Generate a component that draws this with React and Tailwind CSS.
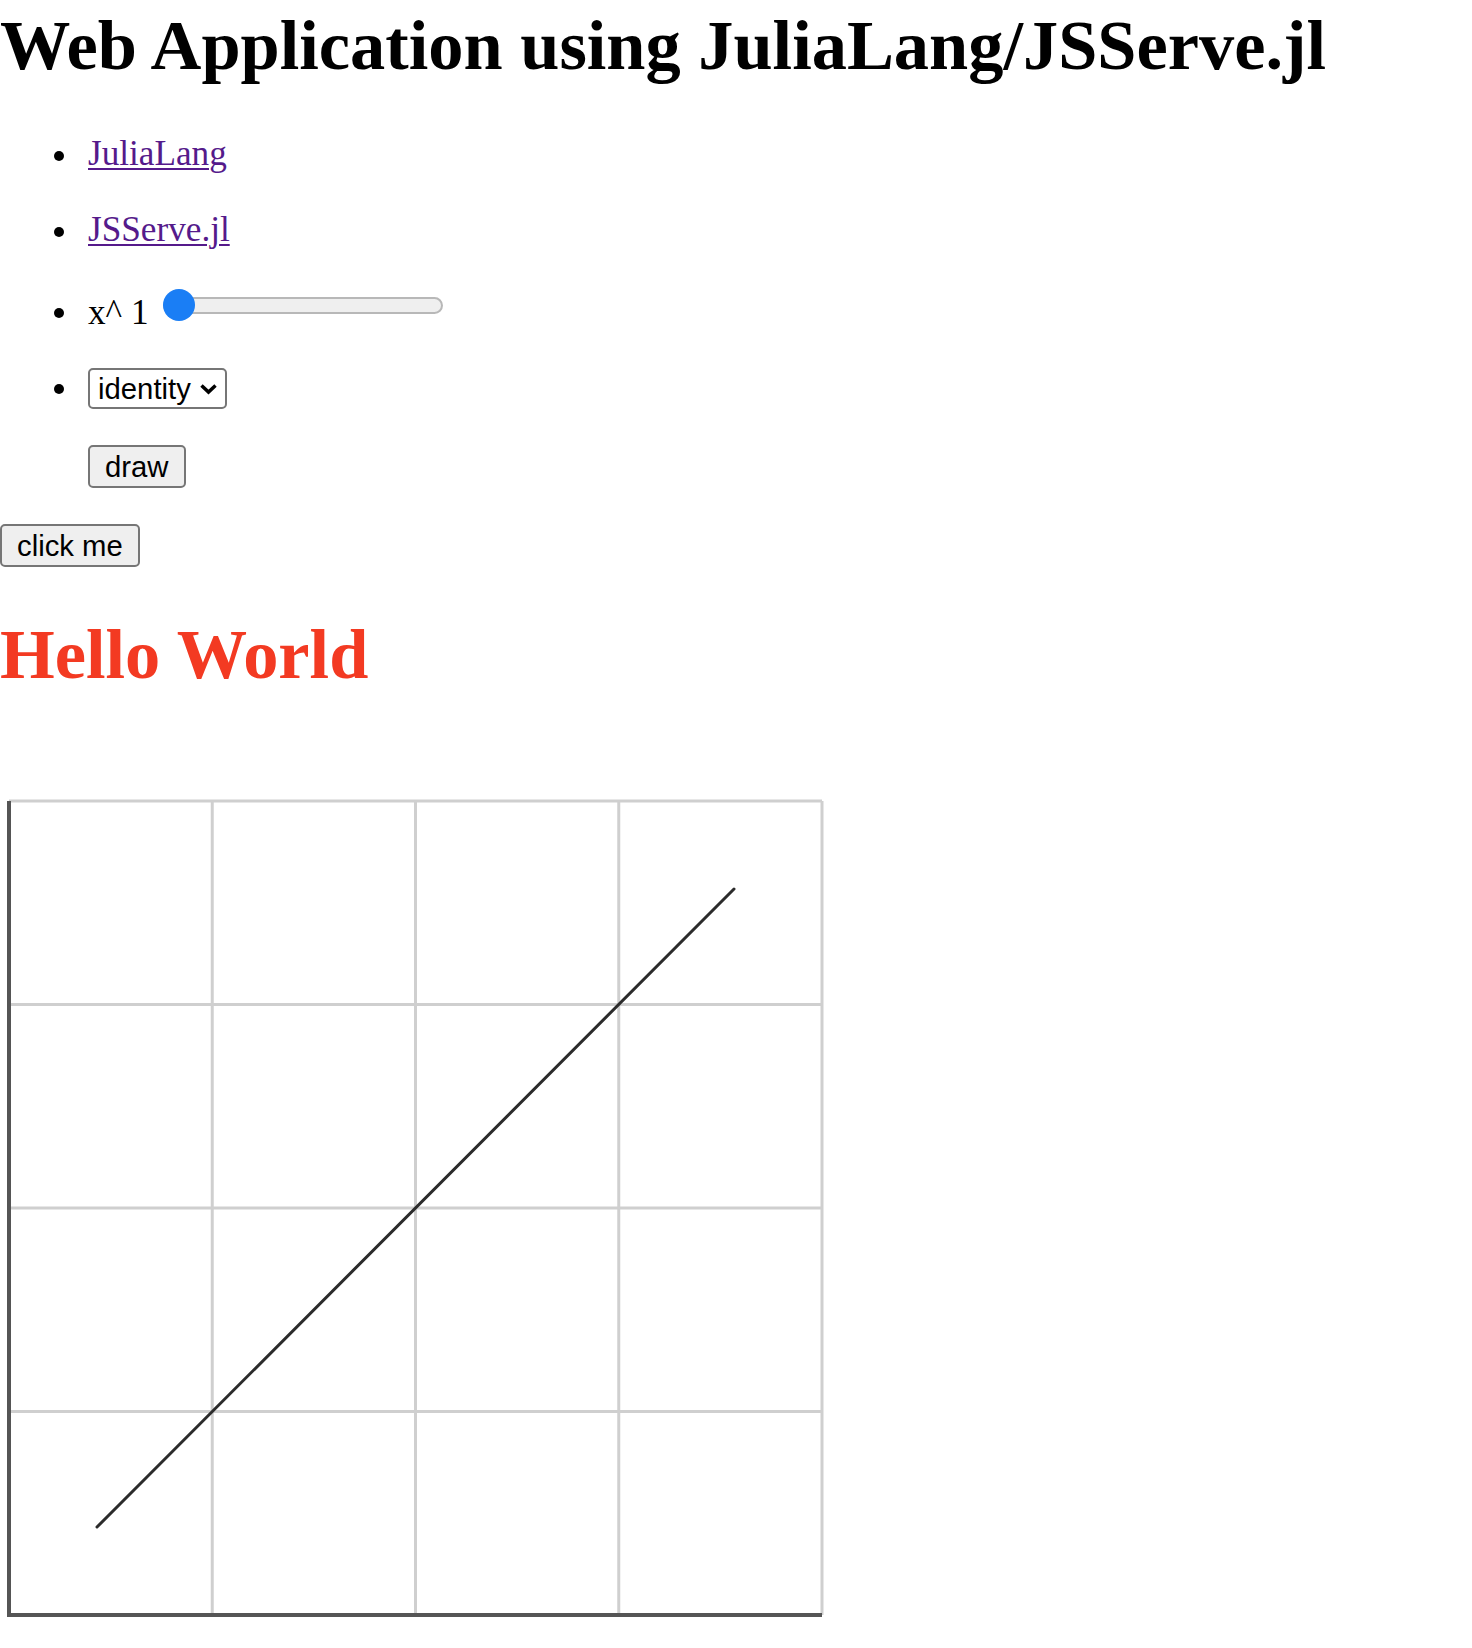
import React from "react";

const serif = "font-['Liberation_Serif','Times_New_Roman',serif]";
const sans = "font-['Liberation_Sans',Arial,sans-serif]";

function Dot({ className = "" }) {
  return (
    <span
      className={`ml-[54px] mr-[24px] h-[10px] w-[10px] shrink-0 rounded-full bg-black ${className}`}
    />
  );
}

function Slider() {
  return (
    <div className="relative -mt-[2px] ml-[14px] flex h-[32px] w-[280px] items-center">
      <div className="h-[17px] w-full rounded-full border-2 border-[#b8b8b8] bg-[#efefef]" />
      <div className="absolute left-0 top-0 h-[32px] w-[32px] rounded-full bg-[#1a7ef5]" />
    </div>
  );
}

function Plot() {
  const xs = [212.25, 415.5, 618.75];
  const ys = [224.5, 428, 631.5];
  return (
    <svg width="840" height="850" className="mt-[81px] block">
      <g stroke="#cfcfcf" strokeWidth="3" fill="none">
        {xs.map((x) => (
          <line key={`v${x}`} x1={x} y1="21" x2={x} y2="835" />
        ))}
        {ys.map((y) => (
          <line key={`h${y}`} x1="9" y1={y} x2="822" y2={y} />
        ))}
        <line x1="9" y1="21" x2="822" y2="21" />
        <line x1="822" y1="21" x2="822" y2="835" />
      </g>
      <g stroke="#555" strokeWidth="4" fill="none">
        <line x1="9" y1="21" x2="9" y2="837" />
        <line x1="7" y1="835" x2="822" y2="835" />
      </g>
      <line x1="97" y1="747" x2="734" y2="109" stroke="#2b2b2b" strokeWidth="3" strokeLinecap="round" />
    </svg>
  );
}

export default function App() {
  return (
    <div className={`${serif} min-h-[1648px] bg-white text-black`}>
      <h1 className="m-0 text-[70.4px] font-bold leading-[90px]">
        Web Application using JuliaLang/JSServe.jl
      </h1>

      <div className="text-[35.2px] leading-[40px]">
        <div className="mt-[44px] flex h-[40px] items-start">
          <Dot className="mt-[17px]" />
          <a href="#" className="text-[#551a8b] underline decoration-2 underline-offset-[3px]">
            JuliaLang
          </a>
        </div>

        <div className="mt-[36px] flex h-[40px] items-start">
          <Dot className="mt-[17px]" />
          <a href="#" className="text-[#551a8b] underline decoration-2 underline-offset-[3px]">
            JSServe.jl
          </a>
        </div>

        <div className="mt-[41px] flex h-[40px] items-start">
          <Dot className="mt-[17px]" />
          <span className="mt-[2px]">x^ 1</span>
          <Slider />
        </div>

        <div className="mt-[37px] flex h-[41px] items-center">
          <Dot />
          <div
            className={`${sans} flex h-[41px] w-[139px] items-center justify-between rounded-[5px] border-2 border-[#767676] bg-white pl-[8px] pr-[7px] text-[29.3px] leading-none`}
          >
            <span>identity</span>
            <svg width="19" height="12" viewBox="0 0 19 12">
              <polyline points="2.5,2.5 9.5,9 16.5,2.5" fill="none" stroke="#000" strokeWidth="3.5" />
            </svg>
          </div>
        </div>

        <div className="mt-[36px] pl-[88px]">
          <button
            type="button"
            className={`${sans} h-[43px] rounded-[5px] border-2 border-[#767676] bg-[#efefef] px-[15px] text-[29.3px] leading-none`}
          >
            draw
          </button>
        </div>
      </div>

      <div className="mt-[36px]">
        <button
          type="button"
          className={`${sans} h-[43px] rounded-[5px] border-2 border-[#767676] bg-[#efefef] px-[15px] text-[29.3px] leading-none`}
        >
          click me
        </button>
      </div>

      <h1 className="mt-[42px] text-[70.4px] font-bold leading-[90px] text-[#f33a22]">
        Hello World
      </h1>

      <Plot />
    </div>
  );
}
